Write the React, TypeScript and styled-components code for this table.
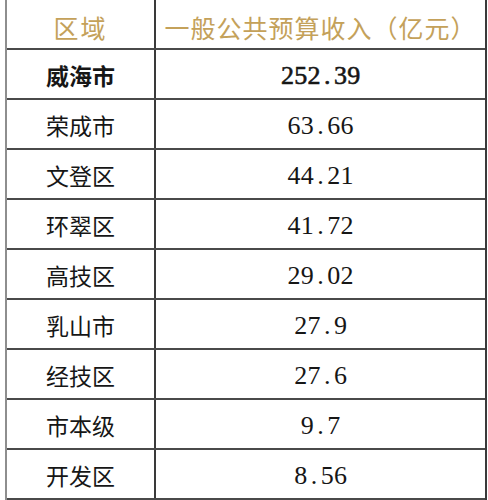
import styled, { createGlobalStyle } from 'styled-components'

const GlobalStyle = createGlobalStyle`
    body {
        margin: 0;
        background: #ffffff;
    }
`

const rows = [
    { name: '威海市', value: '252.39', bold: true },
    { name: '荣成市', value: '63.66' },
    { name: '文登区', value: '44.21' },
    { name: '环翠区', value: '41.72' },
    { name: '高技区', value: '29.02' },
    { name: '乳山市', value: '27.9' },
    { name: '经技区', value: '27.6' },
    { name: '市本级', value: '9.7' },
    { name: '开发区', value: '8.56' },
]

const Table = styled.div`
    margin-left: 5px;
    width: 482px;
    height: 500px;
    overflow: hidden;
    border-left: 2px solid #8e8e8e;
    border-right: 2px solid #3a3a3a;
    box-sizing: border-box;
    font-family: "Noto Sans CJK SC", sans-serif;
`

const Row = styled.div`
    display: grid;
    grid-template-columns: 149px 1fr;
    height: 50px;
    box-sizing: border-box;
    border-bottom: 2px solid #4a4a4a;
`

const Cell = styled.div<{ $head?: boolean; $bold?: boolean }>`
    display: flex;
    align-items: center;
    justify-content: center;
    padding-top: ${p => (p.$head ? '5px' : '1px')};
    box-sizing: border-box;
    color: ${p => (p.$head ? '#c4a15a' : '#161616')};
    font-size: ${p => (p.$head ? '25px' : '23px')};
    font-weight: ${p => (p.$bold ? 700 : 400)};
    white-space: nowrap;
    &:first-child {
        border-right: 2px solid #3a3a3a;
    }
`

const HeadLabel = styled.span<{ $wide?: boolean }>`
    letter-spacing: ${p => (p.$wide ? '1px' : '2px')};
`

// bold row is only slightly heavier than the rest in the reference
const Number = styled.span<{ $bold?: boolean }>`
    font-family: "Liberation Serif", "Times New Roman", serif;
    font-size: 26px;
    font-weight: 400;
    -webkit-text-stroke: ${p => (p.$bold ? '0.6px #161616' : '0')};
    padding-top: 3px;
`

const Glyph = styled.span`
    display: inline-block;
    width: 0.51em;
    text-align: center;
`

const Value = ({ text, bold }: { text: string; bold?: boolean }) => (
    <Number $bold={bold}>
        {text.split('').map((c, i) => (
            <Glyph key={i}>{c}</Glyph>
        ))}
    </Number>
)

export default function App() {
    return (
        <>
            <GlobalStyle />
            <Table>
                <Row>
                    <Cell $head>
                        <HeadLabel>区域</HeadLabel>
                    </Cell>
                    <Cell $head>
                        <HeadLabel $wide>一般公共预算收入（亿元）</HeadLabel>
                    </Cell>
                </Row>
                {rows.map(r => (
                    <Row key={r.name}>
                        <Cell $bold={r.bold}>{r.name}</Cell>
                        <Cell>
                            <Value text={r.value} bold={r.bold} />
                        </Cell>
                    </Row>
                ))}
            </Table>
        </>
    )
}
